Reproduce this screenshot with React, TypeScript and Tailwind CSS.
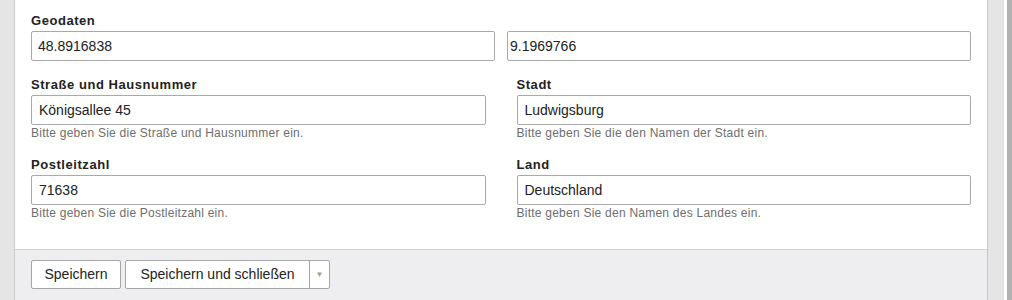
import React from "react";

const font = "font-['Liberation_Sans',Arial,sans-serif]";

function Field({
  label,
  value,
  help,
}: {
  label: string;
  value: string;
  help: string;
}) {
  return (
    <div className="flex flex-col">
      <label className="text-[13px] leading-4 font-bold tracking-[0.55px] text-[#222] mb-[2px]">{label}</label>
      <input
        readOnly
        value={value}
        className="h-[30px] w-full border border-[#a9a9a9] rounded-[2px] px-[7px] text-[14px] text-[#222] bg-white outline-none"
      />
      <p className="text-[12px] leading-4 tracking-[0.24px] text-[#6e6e6e]">{help}</p>
    </div>
  );
}

export default function App() {
  return (
    <div className={`flex w-[1012px] h-[300px] bg-[#e5e5e5] overflow-hidden ${font}`}>
      <div className="w-[14px] shrink-0" />

      {/* main panel */}
      <div className="w-[974px] shrink-0 border-x border-[#c9c9c9] bg-white flex flex-col">
        <div className="px-4 pt-[13px] pb-[28px]">
          {/* Geodaten */}
          <div className="flex flex-col">
            <label className="text-[13px] leading-4 font-bold tracking-[0.55px] text-[#222] mb-[2px]">Geodaten</label>
            <div className="grid grid-cols-2 gap-x-3">
              <input
                readOnly
                value="48.8916838"
                className="h-[30px] border border-[#a9a9a9] rounded-[2px] px-[6px] text-[14px] text-[#222] outline-none"
              />
              <input
                readOnly
                value="9.1969766"
                className="h-[30px] border border-[#a9a9a9] rounded-[2px] px-[2px] text-[14px] text-[#222] outline-none"
              />
            </div>
          </div>

          <div className="grid grid-cols-2 gap-x-[31px] mt-4">
            <Field
              label="Straße und Hausnummer"
              value="Königsallee 45"
              help="Bitte geben Sie die Straße und Hausnummer ein."
            />
            <Field
              label="Stadt"
              value="Ludwigsburg"
              help="Bitte geben Sie die den Namen der Stadt ein."
            />
          </div>

          <div className="grid grid-cols-2 gap-x-[31px] mt-4">
            <Field
              label="Postleitzahl"
              value="71638"
              help="Bitte geben Sie die Postleitzahl ein."
            />
            <Field
              label="Land"
              value="Deutschland"
              help="Bitte geben Sie den Namen des Landes ein."
            />
          </div>
        </div>

        {/* footer toolbar */}
        <div className="flex-1 border-t border-[#d6d6d6] bg-[#eeeef0] px-4 pt-[10px] flex items-start gap-1">
          <button className="h-[29px] w-[90px] border border-[#a6a6a6] rounded-[2px] bg-white text-[14px] text-[#222]">
            Speichern
          </button>
          <div className="h-[29px] w-[205px] flex border border-[#a6a6a6] rounded-[2px] bg-white">
            <button className="flex-1 text-[14px] text-[#222] border-r border-[#a6a6a6]">
              Speichern und schließen
            </button>
            <button className="w-[19px] flex items-center justify-center text-[8px] text-[#a0a0a0]">
              ▼
            </button>
          </div>
        </div>
      </div>

      {/* scrollbar */}
      <div className="w-[16px] shrink-0 bg-[#e5e5e5]" />
      <div className="w-[3px] shrink-0 bg-white" />
      <div className="flex-1 bg-[#b2b2b2]" />
    </div>
  );
}
